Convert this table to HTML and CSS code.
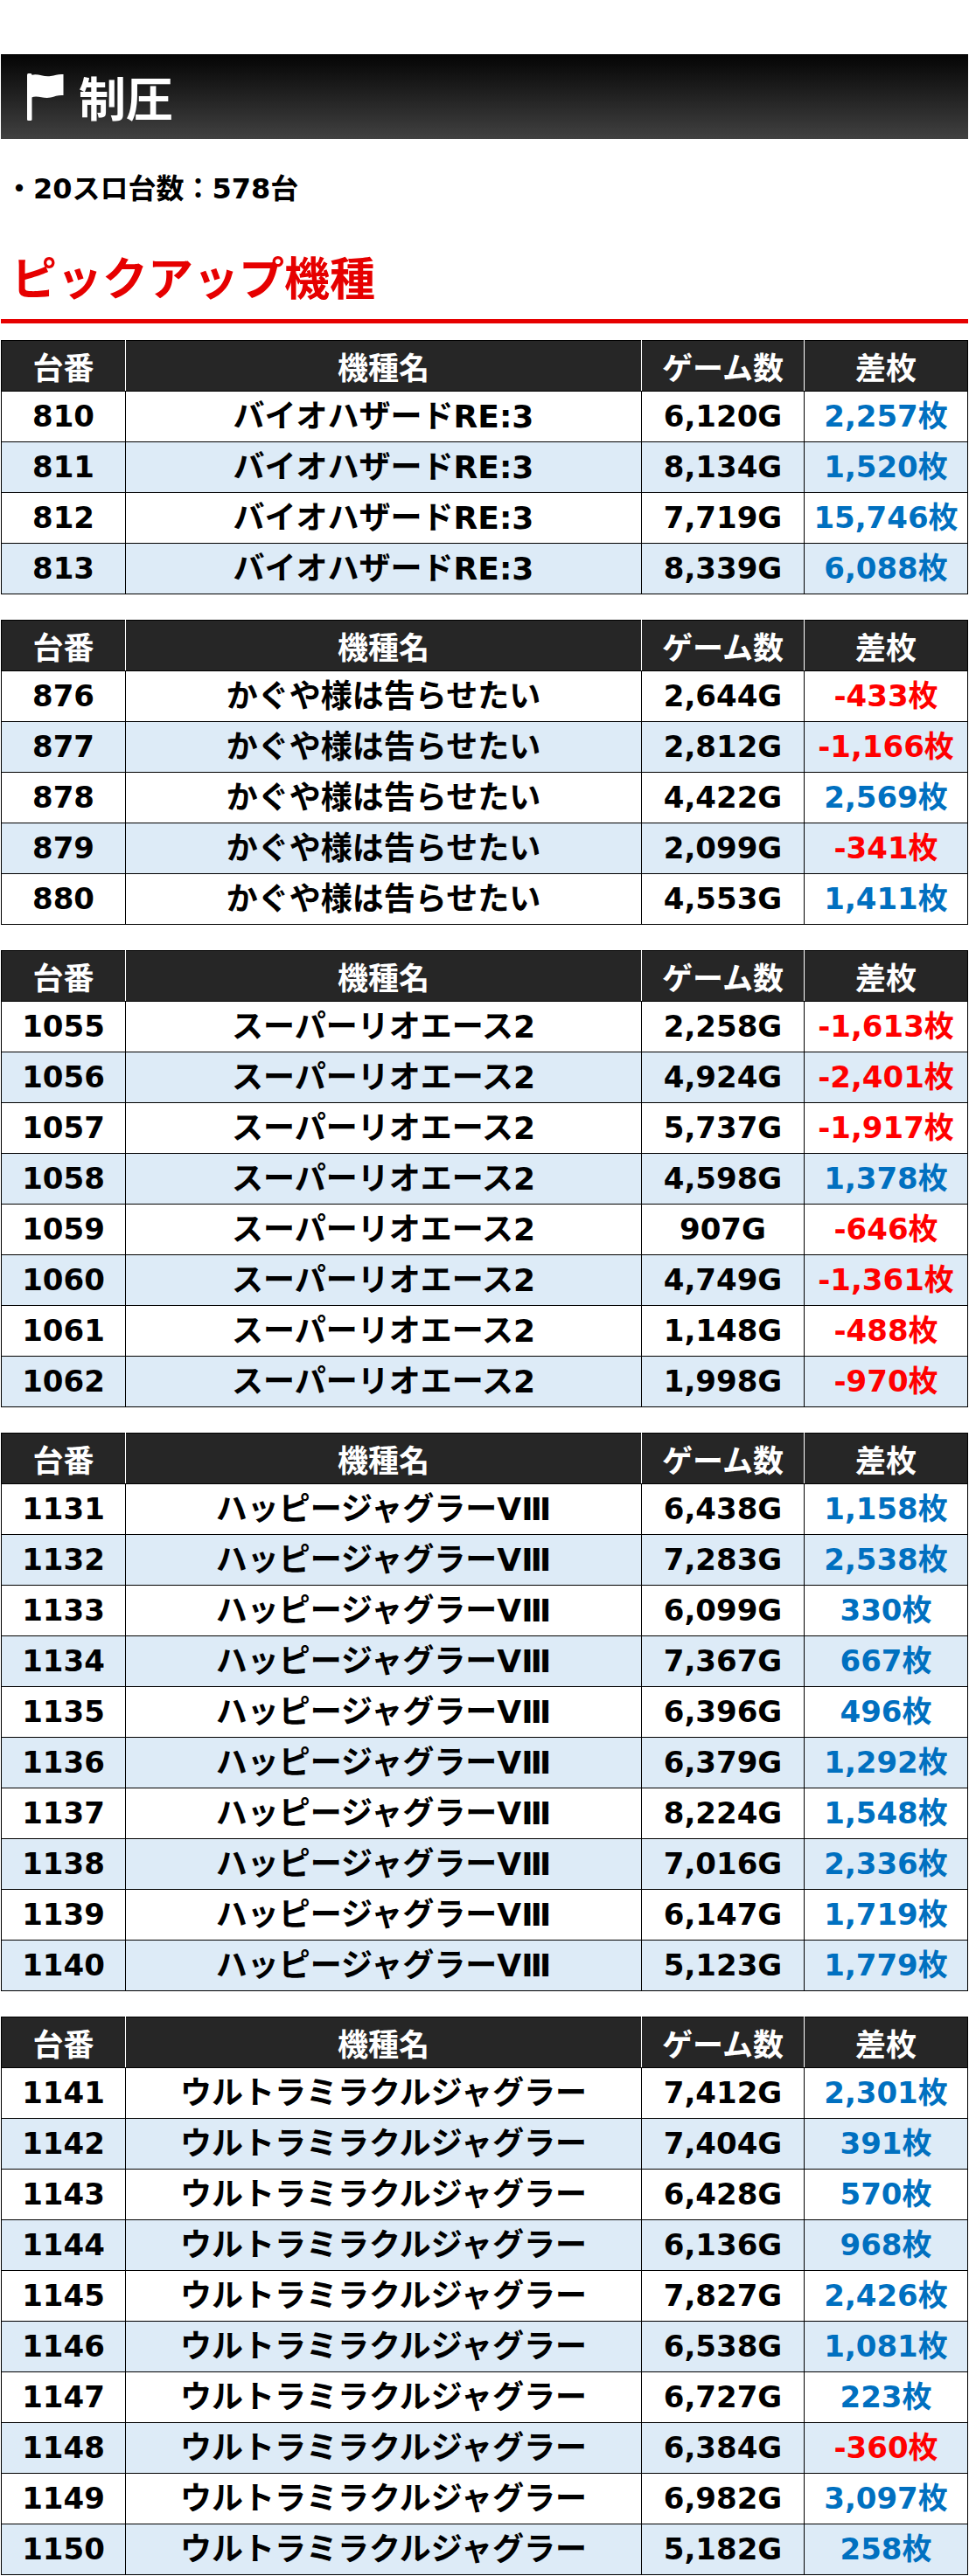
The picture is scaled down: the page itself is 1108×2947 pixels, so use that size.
FILE: index.html
```html
<!DOCTYPE html>
<html lang="ja">
<head>
<meta charset="utf-8">
<title>制圧</title>
<link rel="stylesheet" href="styles.css">
</head>
<body>
<div class="page">
  <h2 class="section-bar">
    <svg class="flag" viewBox="0 0 42 54" width="42" height="54" aria-hidden="true">
      <rect x="0" y="0" width="5.5" height="54" rx="1.5" fill="#fff"/>
      <path d="M5 2 C12 -0.5 19 4.5 27 3 C32 2 36 0.5 41.5 1 L41.5 25 C36 24.5 32 26 27 27.5 C19 29.5 12 24.5 5 27.5 Z" fill="#fff"/>
    </svg>
    <span>制圧</span>
  </h2>
  <p class="count">・20スロ台数：578台</p>
  <h3 class="pickup">ピックアップ機種</h3>

  <table class="data">
    <colgroup><col class="c1"><col class="c2"><col class="c3"><col class="c4"></colgroup>
    <thead><tr><th>台番</th><th>機種名</th><th>ゲーム数</th><th>差枚</th></tr></thead>
    <tbody>
      <tr><td>810</td><td class="name">バイオハザードRE:3</td><td>6,120G</td><td class="plus">2,257枚</td></tr>
      <tr><td>811</td><td class="name">バイオハザードRE:3</td><td>8,134G</td><td class="plus">1,520枚</td></tr>
      <tr><td>812</td><td class="name">バイオハザードRE:3</td><td>7,719G</td><td class="plus">15,746枚</td></tr>
      <tr><td>813</td><td class="name">バイオハザードRE:3</td><td>8,339G</td><td class="plus">6,088枚</td></tr>
    </tbody>
  </table>

  <table class="data">
    <colgroup><col class="c1"><col class="c2"><col class="c3"><col class="c4"></colgroup>
    <thead><tr><th>台番</th><th>機種名</th><th>ゲーム数</th><th>差枚</th></tr></thead>
    <tbody>
      <tr><td>876</td><td class="name">かぐや様は告らせたい</td><td>2,644G</td><td class="minus">-433枚</td></tr>
      <tr><td>877</td><td class="name">かぐや様は告らせたい</td><td>2,812G</td><td class="minus">-1,166枚</td></tr>
      <tr><td>878</td><td class="name">かぐや様は告らせたい</td><td>4,422G</td><td class="plus">2,569枚</td></tr>
      <tr><td>879</td><td class="name">かぐや様は告らせたい</td><td>2,099G</td><td class="minus">-341枚</td></tr>
      <tr><td>880</td><td class="name">かぐや様は告らせたい</td><td>4,553G</td><td class="plus">1,411枚</td></tr>
    </tbody>
  </table>

  <table class="data">
    <colgroup><col class="c1"><col class="c2"><col class="c3"><col class="c4"></colgroup>
    <thead><tr><th>台番</th><th>機種名</th><th>ゲーム数</th><th>差枚</th></tr></thead>
    <tbody>
      <tr><td>1055</td><td class="name">スーパーリオエース2</td><td>2,258G</td><td class="minus">-1,613枚</td></tr>
      <tr><td>1056</td><td class="name">スーパーリオエース2</td><td>4,924G</td><td class="minus">-2,401枚</td></tr>
      <tr><td>1057</td><td class="name">スーパーリオエース2</td><td>5,737G</td><td class="minus">-1,917枚</td></tr>
      <tr><td>1058</td><td class="name">スーパーリオエース2</td><td>4,598G</td><td class="plus">1,378枚</td></tr>
      <tr><td>1059</td><td class="name">スーパーリオエース2</td><td>907G</td><td class="minus">-646枚</td></tr>
      <tr><td>1060</td><td class="name">スーパーリオエース2</td><td>4,749G</td><td class="minus">-1,361枚</td></tr>
      <tr><td>1061</td><td class="name">スーパーリオエース2</td><td>1,148G</td><td class="minus">-488枚</td></tr>
      <tr><td>1062</td><td class="name">スーパーリオエース2</td><td>1,998G</td><td class="minus">-970枚</td></tr>
    </tbody>
  </table>

  <table class="data">
    <colgroup><col class="c1"><col class="c2"><col class="c3"><col class="c4"></colgroup>
    <thead><tr><th>台番</th><th>機種名</th><th>ゲーム数</th><th>差枚</th></tr></thead>
    <tbody>
      <tr><td>1131</td><td class="name">ハッピージャグラーVⅢ</td><td>6,438G</td><td class="plus">1,158枚</td></tr>
      <tr><td>1132</td><td class="name">ハッピージャグラーVⅢ</td><td>7,283G</td><td class="plus">2,538枚</td></tr>
      <tr><td>1133</td><td class="name">ハッピージャグラーVⅢ</td><td>6,099G</td><td class="plus">330枚</td></tr>
      <tr><td>1134</td><td class="name">ハッピージャグラーVⅢ</td><td>7,367G</td><td class="plus">667枚</td></tr>
      <tr><td>1135</td><td class="name">ハッピージャグラーVⅢ</td><td>6,396G</td><td class="plus">496枚</td></tr>
      <tr><td>1136</td><td class="name">ハッピージャグラーVⅢ</td><td>6,379G</td><td class="plus">1,292枚</td></tr>
      <tr><td>1137</td><td class="name">ハッピージャグラーVⅢ</td><td>8,224G</td><td class="plus">1,548枚</td></tr>
      <tr><td>1138</td><td class="name">ハッピージャグラーVⅢ</td><td>7,016G</td><td class="plus">2,336枚</td></tr>
      <tr><td>1139</td><td class="name">ハッピージャグラーVⅢ</td><td>6,147G</td><td class="plus">1,719枚</td></tr>
      <tr><td>1140</td><td class="name">ハッピージャグラーVⅢ</td><td>5,123G</td><td class="plus">1,779枚</td></tr>
    </tbody>
  </table>

  <table class="data">
    <colgroup><col class="c1"><col class="c2"><col class="c3"><col class="c4"></colgroup>
    <thead><tr><th>台番</th><th>機種名</th><th>ゲーム数</th><th>差枚</th></tr></thead>
    <tbody>
      <tr><td>1141</td><td class="name">ウルトラミラクルジャグラー</td><td>7,412G</td><td class="plus">2,301枚</td></tr>
      <tr><td>1142</td><td class="name">ウルトラミラクルジャグラー</td><td>7,404G</td><td class="plus">391枚</td></tr>
      <tr><td>1143</td><td class="name">ウルトラミラクルジャグラー</td><td>6,428G</td><td class="plus">570枚</td></tr>
      <tr><td>1144</td><td class="name">ウルトラミラクルジャグラー</td><td>6,136G</td><td class="plus">968枚</td></tr>
      <tr><td>1145</td><td class="name">ウルトラミラクルジャグラー</td><td>7,827G</td><td class="plus">2,426枚</td></tr>
      <tr><td>1146</td><td class="name">ウルトラミラクルジャグラー</td><td>6,538G</td><td class="plus">1,081枚</td></tr>
      <tr><td>1147</td><td class="name">ウルトラミラクルジャグラー</td><td>6,727G</td><td class="plus">223枚</td></tr>
      <tr><td>1148</td><td class="name">ウルトラミラクルジャグラー</td><td>6,384G</td><td class="minus">-360枚</td></tr>
      <tr><td>1149</td><td class="name">ウルトラミラクルジャグラー</td><td>6,982G</td><td class="plus">3,097枚</td></tr>
      <tr><td>1150</td><td class="name">ウルトラミラクルジャグラー</td><td>5,182G</td><td class="plus">258枚</td></tr>
    </tbody>
  </table>
</div>
</body>
</html>
```

FILE: styles.css
```css
html, body {
  margin: 0;
  padding: 0;
  background: #fff;
}

body {
  font-family: "DejaVu Sans", "Noto Sans CJK JP", sans-serif;
  font-weight: bold;
  color: #000;
}

.page {
  padding: 62px 1px 0 1px;
}

.section-bar {
  display: flex;
  align-items: center;
  gap: 17px;
  height: 97px;
  margin: 0;
  padding: 0 0 0 30px;
  background: linear-gradient(to bottom, #040404 0%, #1f1f1f 45%, #414141 100%);
  color: #fff;
  font-family: "Noto Sans CJK JP", sans-serif;
  font-size: 54px;
  font-weight: bold;
  line-height: 1;
  box-sizing: border-box;
}

.section-bar .flag {
  flex: none;
  margin-top: 1px;
}

.count {
  margin: 34px 0 0 0;
  padding-left: 5px;
  font-size: 32px;
  line-height: 46px;
}

.pickup {
  margin: 40px 0 19px 0;
  padding: 0 0 13px 12px;
  border-bottom: 5px solid #e60000;
  color: #e60000;
  font-family: "Noto Sans CJK JP", sans-serif;
  font-size: 52px;
  font-weight: bold;
  line-height: 73px;
}

.data {
  width: 1105px;
  table-layout: fixed;
  border-collapse: collapse;
  margin: 0 0 29px 0;
  font-size: 34px;
}

.data .c1 { width: 142px; }
.data .c2 { width: 590px; }
.data .c3 { width: 186px; }
.data .c4 { width: 187px; }

.data tr {
  height: 58px;
}

.data th,
.data td {
  border: 1px solid #000;
  padding: 0;
  text-align: center;
  vertical-align: middle;
  white-space: nowrap;
  line-height: 1.2;
}

.data td.name {
  font-size: 36px;
}

.data th {
  background: #262626;
  color: #fff;
  font-family: "Noto Sans CJK JP", sans-serif;
  font-size: 35px;
  border-left-color: #fff;
  border-right-color: #fff;
}

.data th:first-child { border-left-color: #000; }
.data th:last-child { border-right-color: #000; }

.data tbody tr:nth-child(even) td {
  background: #ddebf7;
}

.data td.plus { color: #0070c0; }
.data td.minus { color: #ff0000; }
```
